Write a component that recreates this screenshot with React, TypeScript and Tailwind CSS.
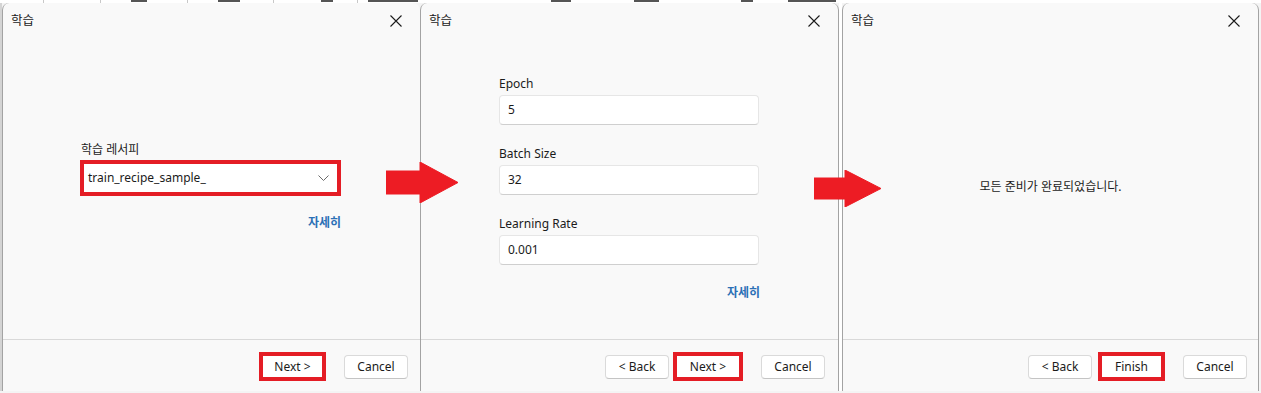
import type { ReactNode } from "react";

// fragments of the table that sits behind the dialogs, only the bottom pixels show
const STRIP_MARKS = [
  { left: 43, width: 1, kind: "line" },
  { left: 100, width: 1, kind: "line" },
  { left: 131, width: 16, kind: "ink" },
  { left: 187, width: 1, kind: "line" },
  { left: 218, width: 22, kind: "ink" },
  { left: 273, width: 1, kind: "line" },
  { left: 321, width: 12, kind: "ink" },
  { left: 357, width: 1, kind: "line" },
  { left: 368, width: 50, kind: "ink" },
  { left: 551, width: 20, kind: "ink" },
  { left: 634, width: 25, kind: "ink" },
  { left: 741, width: 12, kind: "ink" },
  { left: 788, width: 48, kind: "ink" },
];

function CloseIcon() {
  return (
    <svg width="12" height="12" viewBox="0 0 12 12" className="text-[#1b1b1b]">
      <path d="M0.5 0.5 L11.5 11.5 M11.5 0.5 L0.5 11.5" stroke="currentColor" strokeWidth="1.1" fill="none" />
    </svg>
  );
}

function Chevron() {
  return (
    <svg width="11" height="6" viewBox="0 0 11 6" className="text-[#6b6b6b]">
      <path d="M0.5 0.5 L5.5 5.5 L10.5 0.5" stroke="currentColor" strokeWidth="1" fill="none" />
    </svg>
  );
}

function Button({ children }: { children: ReactNode }) {
  return (
    <div className="flex h-[24px] w-[64px] items-center justify-center rounded-[4px] border border-[#dadada] border-b-[#c4c4c4] bg-white text-[12px] text-[#1b1b1b]">
      {children}
    </div>
  );
}

function MarkedButton({ children, width }: { children: ReactNode; width: string }) {
  return (
    <div className={`flex h-[29px] items-center justify-center border-[4px] border-[#e41d25] bg-white text-[12px] text-[#1b1b1b] ${width}`}>
      {children}
    </div>
  );
}

function Dialog({
  className,
  children,
  footer,
}: {
  className: string;
  children: ReactNode;
  footer: ReactNode;
}) {
  return (
    <div className={`flex h-[388px] flex-col rounded-t-[7px] border-[#a3a3a3] bg-[#f9f9f9] ${className}`}>
      <div className="flex h-[36px] shrink-0 items-center justify-between pl-[8px] pr-[18px]">
        <span className="text-[12.5px] text-[#1b1b1b]">학습</span>
        <CloseIcon />
      </div>
      <div className="flex-1">{children}</div>
      <div className="flex h-[52px] shrink-0 items-center justify-end border-t border-[#d9d9d9] pt-[2px]">
        {footer}
      </div>
    </div>
  );
}

function Field({ label, value, first }: { label: string; value: string; first?: boolean }) {
  return (
    <div className={first ? "" : "mt-[21px]"}>
      <div className="text-[12px] leading-[16px] text-[#1b1b1b]">{label}</div>
      <div className="mt-[3px] flex h-[30px] w-[260px] items-center rounded-[4px] border border-[#e6e6e6] border-b-[#cfcfcf] bg-white pl-[8px] text-[12px] text-[#1b1b1b]">
        {value}
      </div>
    </div>
  );
}

function Arrow({ className, w, h, body }: { className: string; w: number; h: number; body: [number, number, number] }) {
  const [bx, top, bottom] = body;
  return (
    <svg width={w} height={h} viewBox={`0 0 ${w} ${h}`} className={`absolute ${className}`}>
      <polygon
        points={`0,${top} ${bx},${top} ${bx},0 ${w},${h / 2} ${bx},${h} ${bx},${bottom} 0,${bottom}`}
        fill="#ed1c24"
        strokeLinejoin="round"
        stroke="#ed1c24"
        strokeWidth="1"
      />
    </svg>
  );
}

export default function App() {
  return (
    <div className="relative h-[393px] w-[1261px] overflow-hidden bg-[#f4f4f4] font-['Noto_Sans','Noto_Sans_CJK_KR',sans-serif]">
      <div className="relative h-[3px] overflow-hidden bg-white">
        {STRIP_MARKS.map((m) => (
          <div
            key={m.left}
            className={m.kind === "line" ? "absolute top-0 h-[3px] bg-[#c8c8c8]" : "absolute top-0 h-[2px] bg-[#555]"}
            style={{ left: m.left, width: m.width }}
          />
        ))}
      </div>

      <div className="flex">
        <div className="h-[388px] w-[2px] bg-[#d4d4d4]" />

        <Dialog
          className="w-[418px] border-l"
          footer={
            <div className="flex items-center gap-[18px] pr-[12px]">
              <MarkedButton width="w-[67px]">Next &gt;</MarkedButton>
              <Button>Cancel</Button>
            </div>
          }
        >
          <div className="flex flex-col pl-[77px] pt-[103px]">
            <div className="pl-[1px] text-[12px] leading-[16px] text-[#1b1b1b]">학습 레서피</div>
            <div className="mt-[2px] flex h-[36px] w-[261px] items-center justify-between border-[4px] border-[#e41d25] bg-white pl-[4px] pr-[8px] text-[12px] text-[#1b1b1b]">
              <span>train_recipe_sample_</span>
              <Chevron />
            </div>
            <div className="mt-[19px] flex w-[261px] justify-end text-[12px] leading-[16px] font-bold text-[#2b70b6]">
              자세히
            </div>
          </div>
        </Dialog>

        <Dialog
          className="w-[419px] border-x"
          footer={
            <div className="flex items-center pr-[13px]">
              <Button>&lt; Back</Button>
              <div className="ml-[4px] mr-[18px]">
                <MarkedButton width="w-[70px]">Next &gt;</MarkedButton>
              </div>
              <Button>Cancel</Button>
            </div>
          }
        >
          <div className="flex flex-col pl-[78px] pt-[37px]">
            <Field label="Epoch" value="5" first />
            <Field label="Batch Size" value="32" />
            <Field label="Learning Rate" value="0.001" />
            <div className="mt-[20px] flex w-[261px] justify-end text-[12px] leading-[16px] font-bold text-[#2b70b6]">
              자세히
            </div>
          </div>
        </Dialog>

        <div className="h-[388px] w-[3px] bg-white" />

        <Dialog
          className="w-[417px] border-x"
          footer={
            <div className="flex items-center pr-[11px]">
              <Button>&lt; Back</Button>
              <div className="ml-[6px] mr-[18px]">
                <MarkedButton width="w-[67px]">Finish</MarkedButton>
              </div>
              <Button>Cancel</Button>
            </div>
          }
        >
          <div className="flex h-full items-center justify-center pb-[4px] text-[12px] text-[#1b1b1b]">
            모든 준비가 완료되었습니다.
          </div>
        </Dialog>
      </div>

      <Arrow className="left-[386px] top-[162px]" w={72} h={41} body={[34, 9, 32]} />
      <Arrow className="left-[814px] top-[170px]" w={67} h={37} body={[31, 8, 29]} />
    </div>
  );
}
